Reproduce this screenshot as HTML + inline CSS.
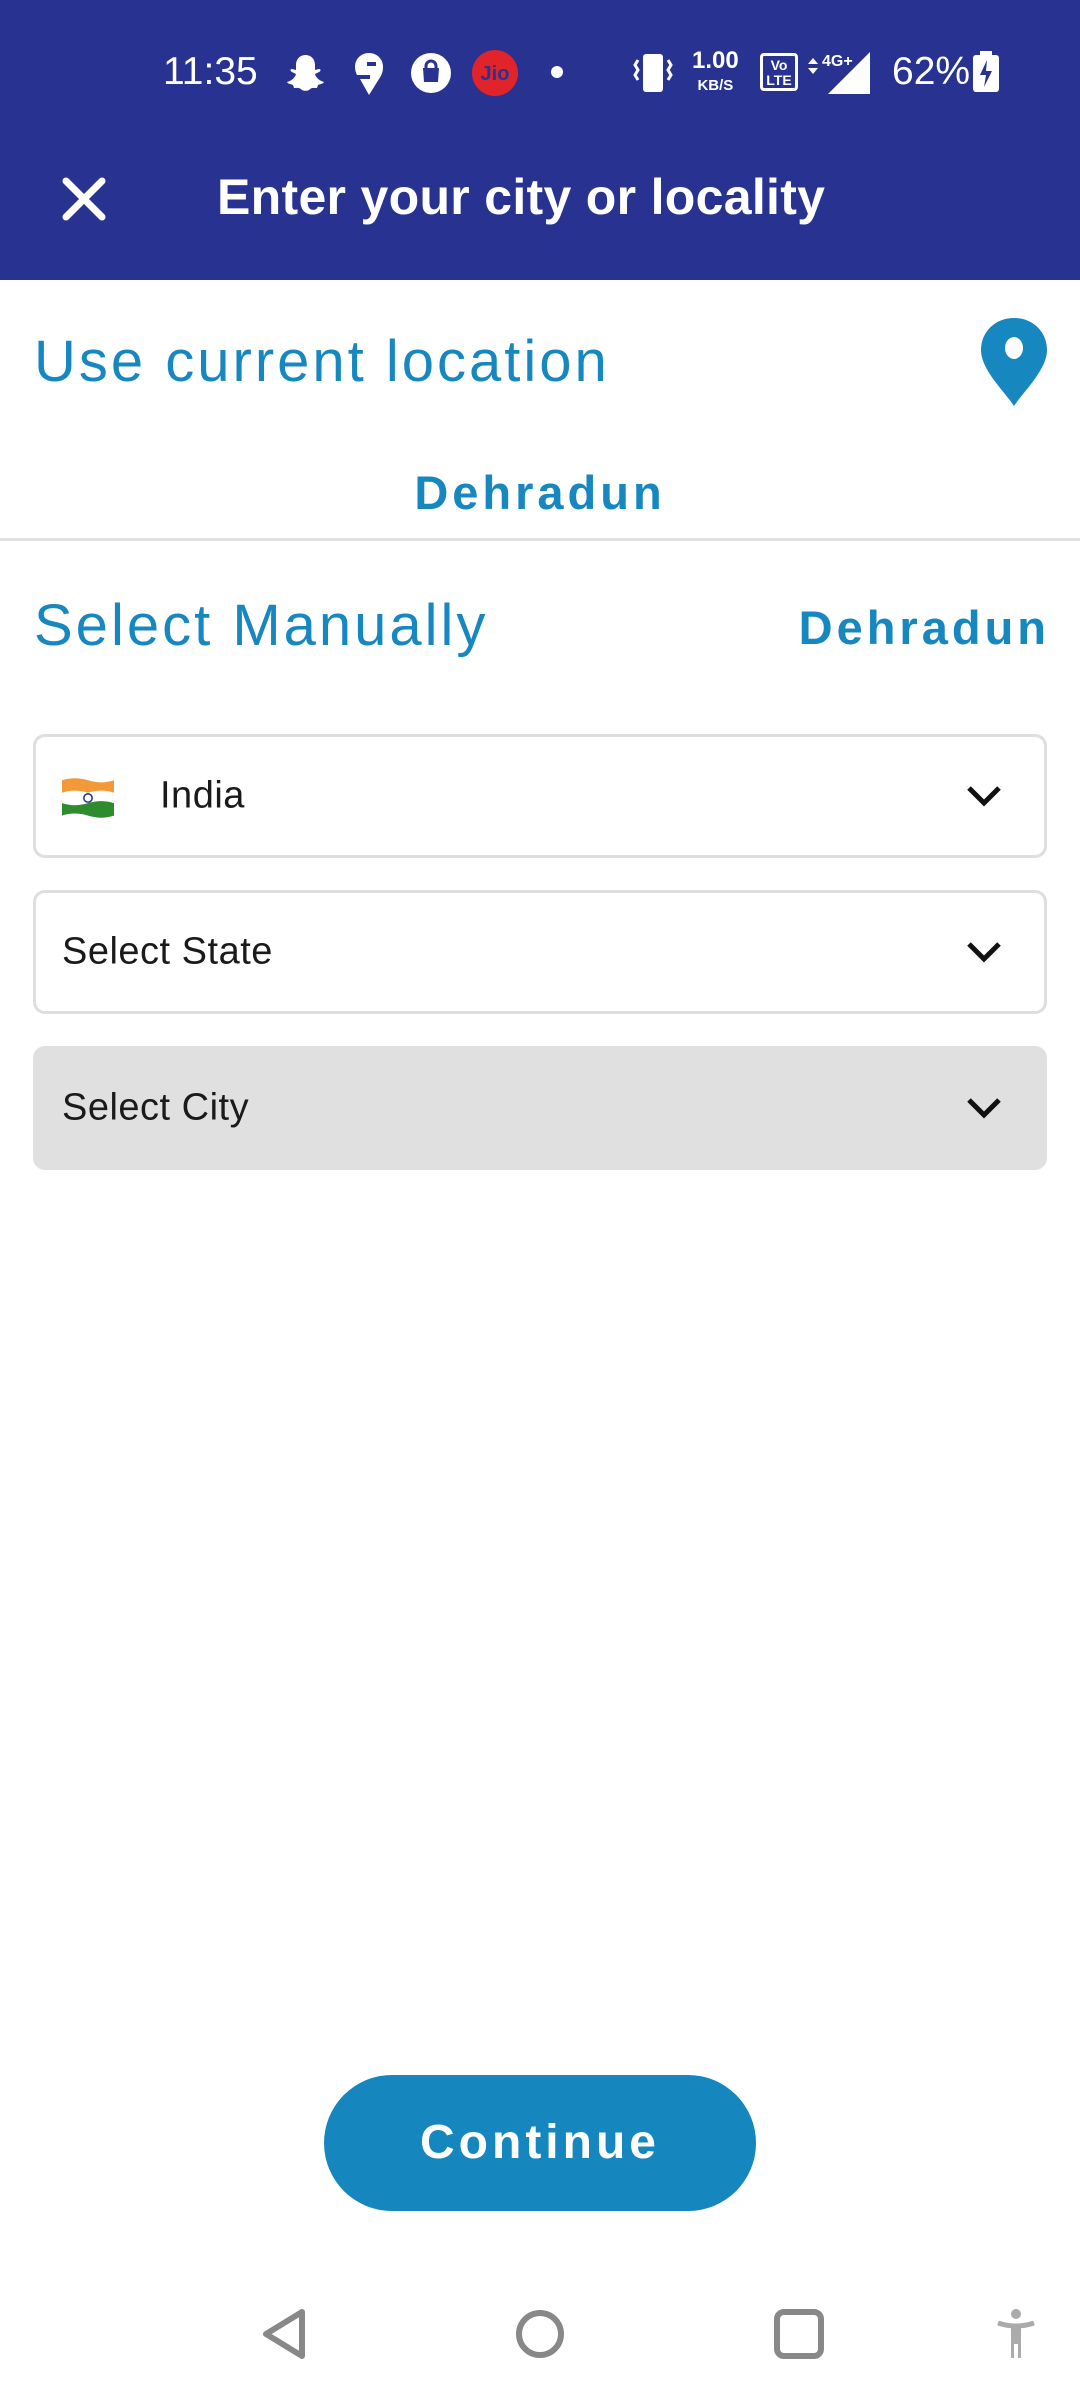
<!DOCTYPE html>
<html><head><meta charset="utf-8"><style>
*{margin:0;padding:0;box-sizing:border-box}
body{width:1080px;height:2400px;background:#fff;position:relative;overflow:hidden;font-family:"Liberation Sans",sans-serif}
.a{position:absolute}
.hdr{left:0;top:0;width:1080px;height:280px;background:#283391}
.st{color:#fff;font-size:39px}
.blue{color:#1787c0}
.box{position:absolute;left:33px;width:1014px;height:124px;border:3px solid #dedede;border-radius:12px}
.box span{position:absolute;top:50%;transform:translateY(-50%);font-size:38px;color:#1a1a1a;letter-spacing:0.5px}
.chev{position:absolute;right:42px;top:50%;margin-top:-12px}
</style></head><body>
<div class="a hdr"></div>
<div class="a st" style="left:163px;top:50px">11:35</div>
<svg class="a" style="left:284px;top:52px" width="42" height="42" viewBox="0 0 42 42"><path d="M21 3c7 0 10 5 10 10v5l4-1c2 0 2 2 0 3l-4 2c1 4 5 7 9 8-1 2-4 2-6 3l-1 3c-3 0-5-1-8 2-2 1-5 1-7 0-3-3-5-2-8-2l-1-3c-2-1-5-1-6-3 4-1 8-4 9-8l-4-2c-2-1-2-3 0-3l4 1v-5c0-5 3-10 10-10z" fill="#fff"/></svg>
<svg class="a" style="left:354px;top:52px" width="30" height="44" viewBox="0 0 30 44"><path d="M15 1C7 1 1 7 1 15c0 3 1 6 2 8h13v4H6l9 16 10-16c3-4 4-8 4-12C29 7 23 1 15 1zm-2 9h9v4h-9z" fill="#fff"/></svg>
<svg class="a" style="left:410px;top:52px" width="42" height="42" viewBox="0 0 42 42"><circle cx="21" cy="21" r="20" fill="#fff"/><path d="M13 16h16l-1 14H14z" fill="#283391"/><path d="M16 17v-3a5 5 0 0 1 10 0v3" stroke="#283391" stroke-width="3" fill="none"/></svg>
<svg class="a" style="left:472px;top:50px" width="46" height="46" viewBox="0 0 46 46"><circle cx="23" cy="23" r="23" fill="#e1232a"/><text x="23" y="30" text-anchor="middle" font-family="Liberation Sans" font-weight="bold" font-size="20" fill="#283391">Jio</text></svg>
<div class="a" style="left:551px;top:66px;width:12px;height:12px;border-radius:50%;background:#fff"></div>
<svg class="a" style="left:632px;top:52px" width="42" height="42" viewBox="0 0 42 42"><rect x="11" y="2" width="20" height="38" rx="3" fill="#fff"/><path d="M6 8l-3 5 3 5-3 5 3 5M36 8l3 5-3 5 3 5-3 5" stroke="#fff" stroke-width="3" fill="none"/></svg>
<div class="a" style="left:692px;top:50px;color:#fff;font-size:24px;line-height:22px;text-align:center;font-weight:bold">1.00<br><span style="font-size:15px">KB/S</span></div>
<div class="a" style="left:760px;top:53px;width:38px;height:38px;border:3px solid #fff;border-radius:4px;color:#fff;font-size:14px;font-weight:bold;line-height:15px;text-align:center;padding-top:2px">Vo<br>LTE</div>
<svg class="a" style="left:808px;top:50px" width="64" height="46" viewBox="0 0 64 46"><path d="M0 14l5-6 5 6zM0 18l5 6 5-6z" fill="#fff"/><text x="14" y="16" font-family="Liberation Sans" font-weight="bold" font-size="16" fill="#fff">4G+</text><path d="M62 2v42H20z" fill="#fff"/></svg>
<div class="a st" style="left:892px;top:50px">62%</div>
<svg class="a" style="left:972px;top:51px" width="28" height="42" viewBox="0 0 28 42"><rect x="8" y="0" width="12" height="5" fill="#fff"/><rect x="1" y="4" width="26" height="37" rx="3" fill="#fff"/><path d="M15 9l-7 15h6l-2 12 8-16h-6z" fill="#283391"/></svg>
<svg class="a" style="left:60px;top:175px" width="48" height="48" viewBox="0 0 48 48"><path d="M6 6l36 36M42 6L6 42" stroke="#fff" stroke-width="7" stroke-linecap="round"/></svg>
<div class="a" style="left:217px;top:168px;color:#fff;font-size:50px;font-weight:bold;letter-spacing:0.3px">Enter your city or locality</div>
<div class="a blue" style="left:34px;top:328px;font-size:58px;letter-spacing:3px">Use current location</div>
<svg class="a" style="left:978px;top:316px" width="72" height="92" viewBox="0 0 72 92"><path d="M36 2C17 2 3 16 3 34c0 20 24 42 33 56 9-14 33-36 33-56C69 16 55 2 36 2z" fill="#1787c0"/><ellipse cx="36" cy="32" rx="9" ry="11" fill="#fff"/></svg>
<div class="a blue" style="left:0;width:1080px;top:465px;text-align:center;font-size:47px;font-weight:bold;letter-spacing:4px">Dehradun</div>
<div class="a" style="left:0;top:538px;width:1080px;height:3px;background:#e0e0e0"></div>
<div class="a blue" style="left:34px;top:592px;font-size:58px;letter-spacing:3px">Select Manually</div>
<div class="a blue" style="right:30px;top:600px;font-size:47px;font-weight:bold;letter-spacing:4px">Dehradun</div>
<div class="box" style="top:734px"><svg class="a" style="left:26px;top:40px" width="52" height="44" viewBox="0 0 50 40"><path d="M0 2q12-4 25 0t25 0v12q-12 4-25 0T0 14z" fill="#f29a3a"/><path d="M0 14q12 4 25 0t25 0v10q-12 4-25 0T0 24z" fill="#fff"/><path d="M0 24q12 4 25 0t25 0v12q-12 4-25 0T0 36z" fill="#2e8b2e"/><circle cx="25" cy="19" r="4" fill="none" stroke="#233a8c" stroke-width="1.5"/></svg><span style="left:124px">India</span><svg class="chev" width="36" height="24" viewBox="0 0 36 24"><path d="M3 4l15 15L33 4" stroke="#111" stroke-width="5" fill="none"/></svg></div>
<div class="box" style="top:890px"><span style="left:26px">Select State</span><svg class="chev" width="36" height="24" viewBox="0 0 36 24"><path d="M3 4l15 15L33 4" stroke="#111" stroke-width="5" fill="none"/></svg></div>
<div class="box" style="top:1046px;background:#e0e0e0;border-color:#e0e0e0"><span style="left:26px">Select City</span><svg class="chev" width="36" height="24" viewBox="0 0 36 24"><path d="M3 4l15 15L33 4" stroke="#111" stroke-width="5" fill="none"/></svg></div>
<div class="a" style="left:324px;top:2075px;width:432px;height:136px;border-radius:68px;background:#1586be;color:#fff;font-size:48px;font-weight:bold;text-align:center;line-height:136px;letter-spacing:4px">Continue</div>
<svg class="a" style="left:260px;top:2308px" width="50" height="52" viewBox="0 0 50 52"><path d="M42 4v44L6 26z" stroke="#888" stroke-width="6" fill="none" stroke-linejoin="round"/></svg>
<svg class="a" style="left:515px;top:2308px" width="50" height="52" viewBox="0 0 50 52"><circle cx="25" cy="26" r="21" stroke="#888" stroke-width="6" fill="none"/></svg>
<svg class="a" style="left:774px;top:2308px" width="50" height="52" viewBox="0 0 50 52"><rect x="3" y="4" width="44" height="44" rx="7" stroke="#888" stroke-width="6" fill="none"/></svg>
<svg class="a" style="left:996px;top:2308px" width="40" height="52" viewBox="0 0 40 52"><circle cx="20" cy="6" r="5" fill="#aaa"/><path d="M2 15q18 6 36 0" stroke="#aaa" stroke-width="5" fill="none"/><rect x="15" y="16" width="10" height="20" fill="#aaa"/><rect x="15" y="34" width="3" height="16" fill="#aaa"/><rect x="22" y="34" width="3" height="16" fill="#aaa"/></svg>
</body></html>
